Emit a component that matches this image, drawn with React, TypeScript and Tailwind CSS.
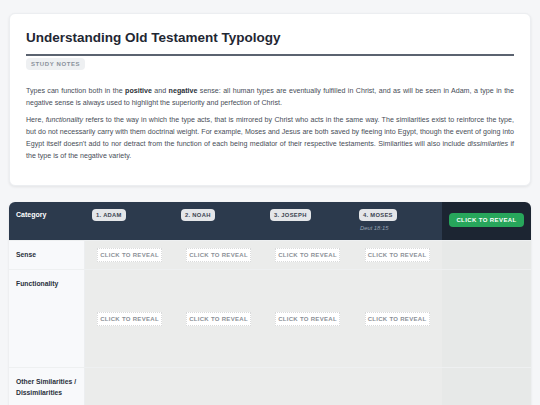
const people = [
  { label: "1. ADAM" },
  { label: "2. NOAH" },
  { label: "3. JOSEPH" },
  { label: "4. MOSES", note: "Deut 18:15" },
];

const rows = [
  { label: "Sense", height: "h-[29px]", reveal: true, center: false },
  { label: "Functionality", height: "h-[98px]", reveal: true, center: true },
  { label: "Other Similarities / Dissimilarities", height: "h-[60px]", reveal: false, center: false },
];

function RevealButton() {
  return (
    <div className="w-[65px] h-[14px] bg-white border border-dotted border-[#d9dadb] flex items-center justify-center whitespace-nowrap text-[6px] leading-none font-bold tracking-[0.3px] text-[#8b9097]">
      CLICK TO REVEAL
    </div>
  );
}

export default function App() {
  return (
    <div className="h-[405px] overflow-hidden bg-[#f5f6f8] px-[9px] pt-[13px] font-['Liberation_Sans',Arial,sans-serif]">
      <div className="bg-white rounded-md shadow-[0_1px_3px_rgba(0,0,0,0.08)] border border-[#eceef1] px-4 pt-[14px] pb-[23px]">
        <h1 className="text-[13.5px] leading-[20px] font-bold text-[#1f2733]">Understanding Old Testament Typology</h1>
        <div className="h-[2px] bg-[#5b6370] mt-[6px]" />
        <div className="mt-[2px] w-fit bg-[#eef0f2] rounded-sm px-[5px] py-[3px] text-[6px] leading-[6px] font-bold tracking-[0.6px] text-[#8a919b]">
          STUDY NOTES
        </div>
        <div className="mt-[15px] text-[7.1px] leading-[12px] text-[#474d57] text-justify">
          <p>
            Types can function both in the <b className="text-[#2a2f37]">positive</b> and <b className="text-[#2a2f37]">negative</b> sense: all human types are eventually fulfilled in Christ, and as will be seen in Adam, a type in the negative sense is always used to highlight the superiority and perfection of Christ.
          </p>
          <p className="mt-[5px]">
            Here, <i>functionality</i> refers to the way in which the type acts, that is mirrored by Christ who acts in the same way. The similarities exist to reinforce the type, but do not necessarily carry with them doctrinal weight. For example, Moses and Jesus are both saved by fleeing into Egypt, though the event of going into Egypt itself doesn't add to nor detract from the function of each being mediator of their respective testaments. Similarities will also include <i>dissimilarties</i> if the type is of the negative variety.
          </p>
        </div>
      </div>

      <div className="mt-[16px] rounded-t-md overflow-hidden shadow-[0_1px_3px_rgba(0,0,0,0.08)]">
        <div className="grid grid-cols-[76px_89px_89px_89px_90px_89px] h-[38px]">
          <div className="bg-[#2c3a4d] px-[7px] pt-[8px] text-[7px] leading-[9px] font-bold text-white">Category</div>
          {people.map((p) => (
            <div key={p.label} className="bg-[#2c3a4d] px-[7px] pt-[7px] flex flex-col items-start">
              <span className="bg-[#e4e6e9] rounded-sm px-[4px] py-[3px] text-[5.8px] leading-[6px] font-bold tracking-[0.3px] text-[#3a4350]">
                {p.label}
              </span>
              {p.note && <div className="mt-[3px] text-[5.8px] leading-[8px] italic text-[#9ba6b5] pl-px">{p.note}</div>}
            </div>
          ))}
          <div className="bg-[#1c2532] px-[7px] pb-[3px] flex items-center">
            <div className="w-full h-[14px] bg-[#27a65b] rounded-sm flex items-center justify-center whitespace-nowrap text-[6px] leading-none font-bold tracking-[0.4px] text-white">
              CLICK TO REVEAL
            </div>
          </div>
        </div>
        {rows.map((r) => (
          <div key={r.label} className={`grid grid-cols-[76px_89px_89px_89px_90px_89px] ${r.height} border-t border-[#eef0f1]`}>
            <div className="bg-[#f8f9fb] px-[7px] pt-[8px] text-[6.8px] leading-[11px] font-bold text-[#2a313c] border-r border-[#eceef0]">
              {r.label}
            </div>
            {people.map((p) => (
              <div key={p.label} className={`bg-[#ebeceb] flex justify-center ${r.center ? "items-center" : "items-start pt-[7px]"}`}>
                {r.reveal && <RevealButton />}
              </div>
            ))}
            <div className="bg-[#e7e9e8]" />
          </div>
        ))}
      </div>
    </div>
  );
}
